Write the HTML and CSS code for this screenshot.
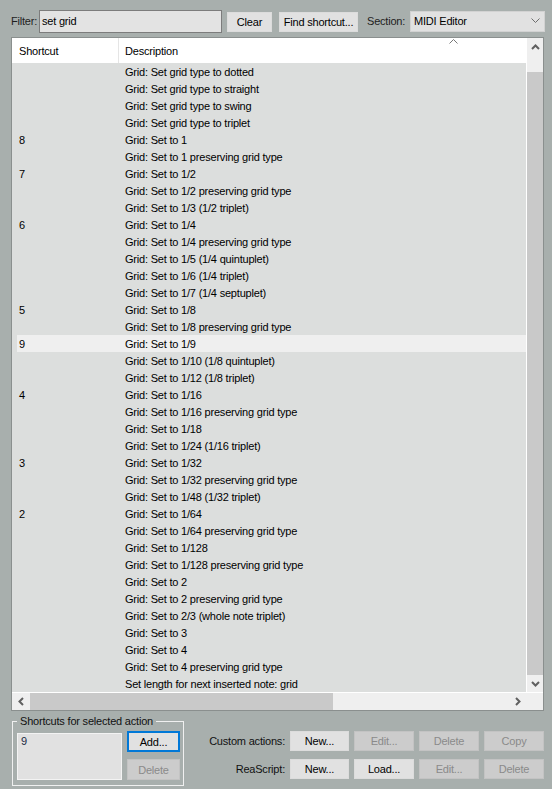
FILE: index.html
```html
<!DOCTYPE html>
<html lang="en">
<head>
    <meta charset="UTF-8">
    <title>Actions</title>
    <link rel="stylesheet" href="styles.css">
</head>
<body>
<div class="page">
    <div class="toolbar">
        <span class="filter-label">Filter:</span>
        <input class="filter-input" type="text" value="set grid">
        <button class="btn btn-clear">Clear</button>
        <button class="btn btn-find">Find shortcut...</button>
        <span class="section-label">Section:</span>
        <div class="select">
            <span>MIDI Editor</span>
            <svg width="9" height="5" viewBox="0 0 9 5"><polyline points="0.5,0.5 4.5,4.5 8.5,0.5" fill="none" stroke="#6d6d6d" stroke-width="1"/></svg>
        </div>
    </div>

    <div class="list">
        <div class="list-main">
            <div class="list-head">
                <div class="col-sc">Shortcut</div>
                <div class="col-desc">Description</div>
                <svg class="sort-arrow" width="9" height="5" viewBox="0 0 9 5"><polyline points="0.5,4.5 4.5,0.5 8.5,4.5" fill="none" stroke="#777" stroke-width="1"/></svg>
            </div>
            <div class="rows">
                <div class="row"><div class="col-sc"></div><div class="col-desc">Grid: Set grid type to dotted</div></div>
                <div class="row"><div class="col-sc"></div><div class="col-desc">Grid: Set grid type to straight</div></div>
                <div class="row"><div class="col-sc"></div><div class="col-desc">Grid: Set grid type to swing</div></div>
                <div class="row"><div class="col-sc"></div><div class="col-desc">Grid: Set grid type to triplet</div></div>
                <div class="row"><div class="col-sc">8</div><div class="col-desc">Grid: Set to 1</div></div>
                <div class="row"><div class="col-sc"></div><div class="col-desc">Grid: Set to 1 preserving grid type</div></div>
                <div class="row"><div class="col-sc">7</div><div class="col-desc">Grid: Set to 1/2</div></div>
                <div class="row"><div class="col-sc"></div><div class="col-desc">Grid: Set to 1/2 preserving grid type</div></div>
                <div class="row"><div class="col-sc"></div><div class="col-desc">Grid: Set to 1/3 (1/2 triplet)</div></div>
                <div class="row"><div class="col-sc">6</div><div class="col-desc">Grid: Set to 1/4</div></div>
                <div class="row"><div class="col-sc"></div><div class="col-desc">Grid: Set to 1/4 preserving grid type</div></div>
                <div class="row"><div class="col-sc"></div><div class="col-desc">Grid: Set to 1/5 (1/4 quintuplet)</div></div>
                <div class="row"><div class="col-sc"></div><div class="col-desc">Grid: Set to 1/6 (1/4 triplet)</div></div>
                <div class="row"><div class="col-sc"></div><div class="col-desc">Grid: Set to 1/7 (1/4 septuplet)</div></div>
                <div class="row"><div class="col-sc">5</div><div class="col-desc">Grid: Set to 1/8</div></div>
                <div class="row"><div class="col-sc"></div><div class="col-desc">Grid: Set to 1/8 preserving grid type</div></div>
                <div class="row sel"><div class="col-sc">9</div><div class="col-desc">Grid: Set to 1/9</div></div>
                <div class="row"><div class="col-sc"></div><div class="col-desc">Grid: Set to 1/10 (1/8 quintuplet)</div></div>
                <div class="row"><div class="col-sc"></div><div class="col-desc">Grid: Set to 1/12 (1/8 triplet)</div></div>
                <div class="row"><div class="col-sc">4</div><div class="col-desc">Grid: Set to 1/16</div></div>
                <div class="row"><div class="col-sc"></div><div class="col-desc">Grid: Set to 1/16 preserving grid type</div></div>
                <div class="row"><div class="col-sc"></div><div class="col-desc">Grid: Set to 1/18</div></div>
                <div class="row"><div class="col-sc"></div><div class="col-desc">Grid: Set to 1/24 (1/16 triplet)</div></div>
                <div class="row"><div class="col-sc">3</div><div class="col-desc">Grid: Set to 1/32</div></div>
                <div class="row"><div class="col-sc"></div><div class="col-desc">Grid: Set to 1/32 preserving grid type</div></div>
                <div class="row"><div class="col-sc"></div><div class="col-desc">Grid: Set to 1/48 (1/32 triplet)</div></div>
                <div class="row"><div class="col-sc">2</div><div class="col-desc">Grid: Set to 1/64</div></div>
                <div class="row"><div class="col-sc"></div><div class="col-desc">Grid: Set to 1/64 preserving grid type</div></div>
                <div class="row"><div class="col-sc"></div><div class="col-desc">Grid: Set to 1/128</div></div>
                <div class="row"><div class="col-sc"></div><div class="col-desc">Grid: Set to 1/128 preserving grid type</div></div>
                <div class="row"><div class="col-sc"></div><div class="col-desc">Grid: Set to 2</div></div>
                <div class="row"><div class="col-sc"></div><div class="col-desc">Grid: Set to 2 preserving grid type</div></div>
                <div class="row"><div class="col-sc"></div><div class="col-desc">Grid: Set to 2/3 (whole note triplet)</div></div>
                <div class="row"><div class="col-sc"></div><div class="col-desc">Grid: Set to 3</div></div>
                <div class="row"><div class="col-sc"></div><div class="col-desc">Grid: Set to 4</div></div>
                <div class="row"><div class="col-sc"></div><div class="col-desc">Grid: Set to 4 preserving grid type</div></div>
                <div class="row"><div class="col-sc"></div><div class="col-desc">Set length for next inserted note: grid</div></div>
            </div>
        </div>

        <div class="vscroll">
            <div class="sb-btn">
                <svg width="9" height="6" viewBox="0 0 9 6"><polyline points="1,5 4.5,1.5 8,5" fill="none" stroke="#606060" stroke-width="2"/></svg>
            </div>
            <div class="sb-gap"></div>
            <div class="vthumb"></div>
            <div class="sb-btn">
                <svg width="9" height="6" viewBox="0 0 9 6"><polyline points="1,1 4.5,4.5 8,1" fill="none" stroke="#606060" stroke-width="2"/></svg>
            </div>
        </div>

        <div class="hscroll">
            <div class="sb-btn">
                <svg width="6" height="9" viewBox="0 0 6 9"><polyline points="5,1 1.5,4.5 5,8" fill="none" stroke="#606060" stroke-width="2"/></svg>
            </div>
            <div class="hthumb"></div>
            <div class="sb-fill"></div>
            <div class="sb-btn">
                <svg width="6" height="9" viewBox="0 0 6 9"><polyline points="1,1 4.5,4.5 1,8" fill="none" stroke="#606060" stroke-width="2"/></svg>
            </div>
            <div class="sb-corner"></div>
        </div>
    </div>

    <div class="bottom">
        <fieldset class="group">
            <legend>Shortcuts for selected action</legend>
            <div class="group-body">
                <div class="sc-list">9</div>
                <div class="sc-buttons">
                    <button class="btn btn-focus">Add...</button>
                    <button class="btn" disabled>Delete</button>
                </div>
            </div>
        </fieldset>

        <div class="actions">
            <span class="act-label">Custom actions:</span>
            <button class="btn">New...</button>
            <button class="btn" disabled>Edit...</button>
            <button class="btn" disabled>Delete</button>
            <button class="btn" disabled>Copy</button>

            <span class="act-label">ReaScript:</span>
            <button class="btn">New...</button>
            <button class="btn">Load...</button>
            <button class="btn" disabled>Edit...</button>
            <button class="btn" disabled>Delete</button>
        </div>
    </div>
</div>
</body>
</html>
```

FILE: styles.css
```css
* {
    box-sizing: border-box;
}
body {
    margin: 0;
    background: #a8afad;
    font-family: "Liberation Sans", Arial, sans-serif;
    font-size: 11px;
    letter-spacing: -0.2px;
    color: #000;
}
.page {
    width: 552px;
    height: 789px;
    padding: 10px 0 0 11px;
    overflow: hidden;
}

/* top bar */
.toolbar {
    display: flex;
    align-items: center;
    height: 23px;
}
.filter-label {
    width: 28px;
    padding-bottom: 1px;
    color: #1e1e1e;
}
.filter-input {
    width: 183px;
    height: 23px;
    margin: 0 5px 0 0;
    padding: 0 2px 2px;
    border: 1px solid #7c7c7c;
    background: #e3e3e3;
    font: inherit;
    letter-spacing: inherit;
    color: #000;
    outline: none;
}
.btn {
    height: 20px;
    padding: 0;
    background: #e1e1e1;
    border: 1px solid #dcdcdc;
    font: inherit;
    letter-spacing: inherit;
    color: #000;
}
.btn:disabled {
    background: #cccccc;
    border-color: #c3c3c3;
    color: #8a8a8a;
}
.btn-focus {
    height: 21px;
    border: 2px solid #0078d7;
}
.btn-clear {
    width: 45px;
    margin-right: 7px;
}
.btn-find {
    width: 79px;
    margin-right: 9px;
}
.section-label {
    width: 43px;
    padding-bottom: 1px;
    color: #1e1e1e;
}
.select {
    width: 135px;
    height: 21px;
    padding: 0 4px 2px 3px;
    display: flex;
    align-items: center;
    justify-content: space-between;
    background: #e1e1e1;
    border: 1px solid #d2d2d2;
}

/* action list */
.list {
    margin-top: 4px;
    width: 533px;
    height: 674px;
    border: 1px solid #8a8f8e;
    display: grid;
    grid-template-columns: 514px 17px;
    grid-template-rows: 654px 18px;
}
.list-main {
    overflow: hidden;
}
.list-head {
    position: relative;
    display: flex;
    height: 25px;
    padding-top: 2px;
    line-height: 23px;
    background: #fff;
}
.list-head .col-sc {
    width: 107px;
    margin-top: -2px;
    padding-top: 2px;
    border-right: 1px solid #e5e5e5;
}
.list-head .col-desc {
    padding-left: 6px;
}
.sort-arrow {
    position: absolute;
    left: 437px;
    top: 1px;
}
.rows {
    background: #dcdedd;
}
.row {
    display: flex;
    height: 17px;
    line-height: 19px;
    white-space: nowrap;
}
.row.sel {
    background: linear-gradient(to right, #dcdedd 5px, #efefef 5px);
}
.col-sc {
    width: 106px;
    flex: none;
    padding-left: 7px;
}
.col-desc {
    padding-left: 7px;
}

/* scrollbars */
.vscroll {
    display: flex;
    flex-direction: column;
    border-left: 1px solid #fff;
    background: #efefef;
}
.sb-btn {
    width: 16px;
    height: 17px;
    flex: none;
    display: flex;
    align-items: center;
    justify-content: center;
}
.sb-gap {
    height: 17px;
}
.vthumb {
    flex: 1;
    background: #c9c9c9;
}
.hscroll {
    grid-column: 1 / 3;
    display: flex;
    border-top: 1px solid #fff;
    background: #efefef;
}
.hscroll .sb-btn {
    width: 17px;
}
.hthumb {
    width: 303px;
    margin-left: 1px;
    background: #c9c9c9;
}
.sb-fill {
    flex: 1;
}
.sb-corner {
    width: 17px;
}

/* bottom panel */
.bottom {
    display: flex;
}
.group {
    width: 172px;
    margin: 4px 0 0 1px;
    padding: 3px 3px 5px 4px;
    border: 1px solid #f0f0f0;
}
.group legend {
    padding: 0 3px;
    line-height: 13px;
    color: #111;
}
.group-body {
    display: flex;
    gap: 5px;
}
.sc-list {
    width: 105px;
    height: 47px;
    margin-top: 2px;
    padding: 1px 3px;
    background: #e1e1e1;
    border: 1px solid #f3f3f3;
    color: #1b2a44;
}
.sc-buttons {
    display: flex;
    flex-direction: column;
    gap: 7px;
}
.sc-buttons .btn {
    width: 53px;
    height: 21px;
}
.actions {
    margin-top: 20px;
    display: grid;
    grid-template-columns: 101px 59px 60px 60px 60px;
    grid-template-rows: 20px 20px;
    column-gap: 5px;
    row-gap: 8px;
    align-items: center;
}
.act-label {
    text-align: right;
    color: #111;
}
.actions .btn {
    height: 20px;
}
```
